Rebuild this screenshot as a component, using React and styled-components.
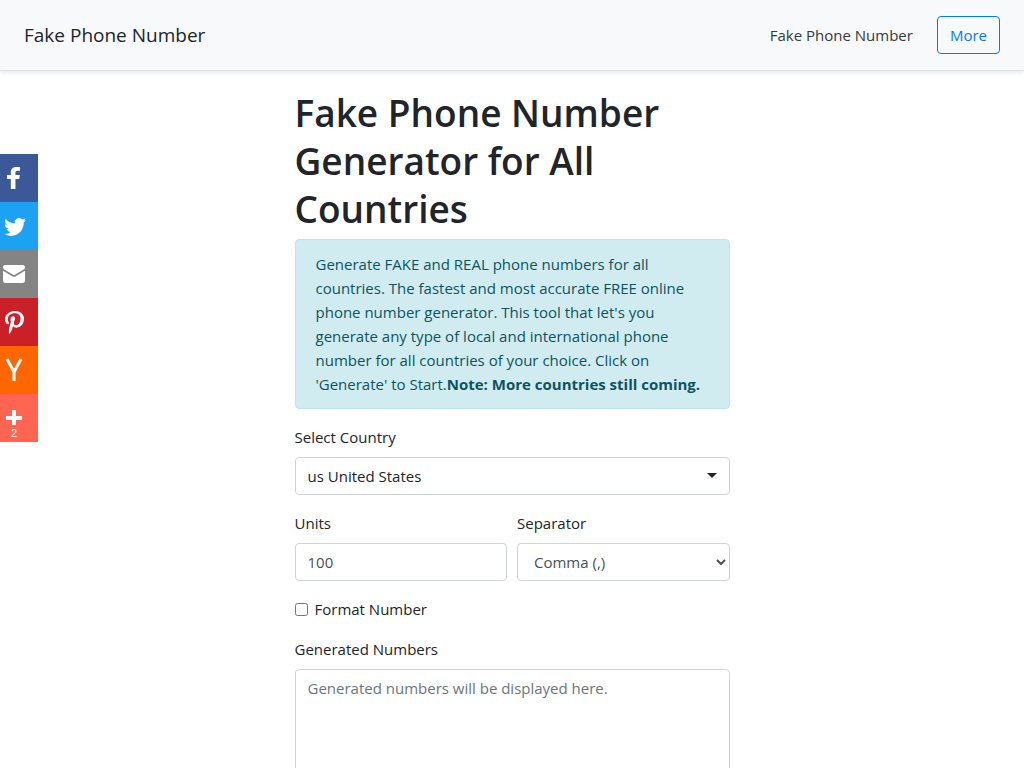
import React from "react";
import styled, { createGlobalStyle } from "styled-components";

const GlobalStyle = createGlobalStyle`
  *, *::before, *::after { box-sizing: border-box; }
  body {
    margin: 0;
    background: #fff;
    color: #212529;
    font-family: "Segoe UI", "Open Sans", "Noto Sans", sans-serif;
    font-size: 15px;
    line-height: 24px;
  }
  input, select, textarea, button { font: inherit; }
`;

const Header = styled.header`
  display: flex;
  align-items: center;
  justify-content: space-between;
  padding: 16px 24px;
  background: #f8f9fa;
  border-bottom: 1px solid #dee2e6;
  box-shadow: 0 2px 4px rgba(0, 0, 0, 0.08);
`;

const Brand = styled.a`
  color: #212529;
  font-size: 19px;
  text-decoration: none;
`;

const Nav = styled.nav`
  display: flex;
  align-items: center;
  gap: 24px;
`;

const NavLink = styled.a`
  color: #343a40;
  text-decoration: none;
`;

const MoreButton = styled.button`
  height: 38px;
  padding: 0 12px;
  color: #007bff;
  background: transparent;
  border: 1px solid #007bff;
  border-radius: 4px;
`;

const ShareBar = styled.aside`
  position: fixed;
  top: 154px;
  left: -10px;
  display: flex;
  flex-direction: column;
`;

const ShareButton = styled.button`
  position: relative;
  width: 48px;
  height: 48px;
  padding: 8px;
  border: 0;
  color: #fff;
  background: ${(p) => p.$color};

  svg { display: block; }
`;

const ShareCount = styled.span`
  position: absolute;
  inset: auto 0 2px;
  font: 11px/14px "Liberation Sans", Arial, sans-serif;
  text-align: center;
`;

const Main = styled.main`
  max-width: 435px;
  margin: 0 auto;
  padding: 18px 0 24px;
`;

const Title = styled.h1`
  margin: 0 0 6px;
  font-size: 37px;
  font-weight: 600;
  line-height: 48px;
`;

const Notice = styled.p`
  margin: 0 0 16px;
  padding: 12px 20px;
  color: #0c5460;
  background: #d1ecf1;
  border: 1px solid #bee5eb;
  border-radius: 4px;
`;

const Form = styled.form`
  display: flex;
  flex-direction: column;
  gap: 16px;
`;

const Row = styled.div`
  display: grid;
  grid-template-columns: 1fr 1fr;
  gap: 10px;
`;

const Field = styled.div`
  display: flex;
  flex-direction: column;
  gap: 8px;
`;

const Label = styled.label`
  color: #212529;
`;

const Control = styled.input`
  width: 100%;
  height: 38px;
  padding: 6px 12px;
  color: #495057;
  background: #fff;
  border: 1px solid #ced4da;
  border-radius: 4px;
`;

const CountrySelect = styled(Control)`
  appearance: none;
  color: #212529;
`;

const SelectWrap = styled.div`
  position: relative;

  &::after {
    content: "";
    position: absolute;
    top: 16px;
    right: 13px;
    border: 5px solid transparent;
    border-top-color: #212529;
    border-bottom: 0;
    pointer-events: none;
  }
`;

const Output = styled(Control)`
  display: block;
  height: auto;
  resize: vertical;

  &::placeholder { color: #6c757d; }
`;

const CheckRow = styled.div`
  display: flex;
  align-items: center;
  gap: 7px;
`;

const Checkbox = styled.input`
  width: 13px;
  height: 13px;
  margin: 0;
`;

const networks = [
  {
    name: "Facebook",
    color: "#3b5998",
    art: <path d="M22 5.16c-.406-.054-1.806-.16-3.43-.16-3.4 0-5.733 1.825-5.733 5.17v2.882H9v3.913h3.837V27h4.604V16.965h3.823l.587-3.913h-4.41v-2.5c0-1.123.347-1.903 2.198-1.903H22V5.16z" />,
  },
  {
    name: "Twitter",
    color: "#1da1f2",
    art: <path d="M27.996 10.116c-.81.36-1.68.602-2.592.71a4.526 4.526 0 0 0 1.984-2.496 9.037 9.037 0 0 1-2.866 1.095 4.513 4.513 0 0 0-7.69 4.116 12.81 12.81 0 0 1-9.3-4.715 4.49 4.49 0 0 0-.612 2.27 4.51 4.51 0 0 0 2.008 3.755 4.495 4.495 0 0 1-2.044-.564v.057a4.515 4.515 0 0 0 3.62 4.425 4.52 4.52 0 0 1-2.04.077 4.517 4.517 0 0 0 4.217 3.134 9.055 9.055 0 0 1-5.604 1.93A9.18 9.18 0 0 1 6 23.85a12.773 12.773 0 0 0 6.918 2.027c8.3 0 12.84-6.876 12.84-12.84 0-.195-.005-.39-.014-.583a9.172 9.172 0 0 0 2.252-2.336" />,
  },
  {
    name: "Email",
    color: "#848484",
    art: (
      <>
        <path d="M27 22.757c0 1.24-.988 2.243-2.19 2.243H7.19C5.98 25 5 23.994 5 22.757V13.67c0-.556.39-.773.855-.496l8.78 5.238c.782.467 1.95.467 2.73 0l8.78-5.238c.472-.28.855-.063.855.495v9.087z" />
        <path d="M27 9.243C27 8.006 26.02 7 24.81 7H7.19C5.988 7 5 8.004 5 9.243v.465c0 .554.385 1.232.857 1.514l9.61 5.733c.267.16.8.16 1.067 0l9.61-5.733c.473-.283.856-.96.856-1.514v-.465z" />
      </>
    ),
  },
  {
    name: "Pinterest",
    color: "#cb2027",
    art: <path d="M7 13.252c0 1.81.772 4.45 2.895 5.045.074.014.178.04.252.04.49 0 .772-1.27.772-1.63 0-.428-1.174-1.34-1.174-3.123 0-3.705 3.028-6.33 6.947-6.33 3.37 0 5.863 1.782 5.863 5.058 0 2.446-1.054 7.035-4.468 7.035-1.232 0-2.286-.83-2.286-2.018 0-1.742 1.307-3.43 1.307-5.225 0-1.092-.67-1.977-1.916-1.977-1.692 0-2.732 1.77-2.732 3.165 0 .774.104 1.63.476 2.336-.683 2.736-2.08 6.814-2.08 9.633 0 .87.135 1.728.224 2.6l.134.137.207-.07c2.494-3.178 2.405-3.8 3.533-7.96.61 1.077 2.182 1.658 3.43 1.658 5.254 0 7.614-4.77 7.614-9.067C26 7.987 21.755 5 17.094 5 12.017 5 7 8.15 7 13.252z" />,
  },
  {
    name: "Hacker News",
    color: "#ff6600",
    art: <path d="M9 5 16 18 23 5M16 17v10" fill="none" stroke="currentColor" strokeWidth="3" />,
  },
  {
    name: "More sharing options",
    color: "#ff6550",
    count: 2,
    art: <path d="M18 14V8h-4v6H8v4h6v5h4v-5h6v-4h-6z" />,
  },
];

export default function App() {
  return (
    <>
      <GlobalStyle />
      <Header>
        <Brand href="#">Fake Phone Number</Brand>
        <Nav>
          <NavLink href="#">Fake Phone Number</NavLink>
          <MoreButton type="button">More</MoreButton>
        </Nav>
      </Header>

      <ShareBar aria-label="Share">
        {networks.map((n) => (
          <ShareButton key={n.name} type="button" aria-label={n.name} $color={n.color}>
            <svg width="32" height="32" viewBox="0 0 32 32" fill="currentColor" aria-hidden="true">
              {n.art}
            </svg>
            {n.count && <ShareCount>{n.count}</ShareCount>}
          </ShareButton>
        ))}
      </ShareBar>

      <Main>
        <Title>Fake Phone Number Generator for All Countries</Title>
        <Notice>
          Generate FAKE and REAL phone numbers for all countries. The fastest and most accurate
          FREE online phone number generator. This tool that let's you generate any type of local
          and international phone number for all countries of your choice. Click on 'Generate' to
          Start.<strong>Note: More countries still coming.</strong>
        </Notice>
        <Form>
          <Field>
            <Label htmlFor="country">Select Country</Label>
            <SelectWrap>
              <CountrySelect as="select" id="country">
                <option>us United States</option>
              </CountrySelect>
            </SelectWrap>
          </Field>
          <Row>
            <Field>
              <Label htmlFor="units">Units</Label>
              <Control id="units" type="text" inputMode="numeric" defaultValue="100" />
            </Field>
            <Field>
              <Label htmlFor="separator">Separator</Label>
              <Control as="select" id="separator">
                <option>Comma (,)</option>
              </Control>
            </Field>
          </Row>
          <CheckRow>
            <Checkbox id="format" type="checkbox" />
            <Label htmlFor="format">Format Number</Label>
          </CheckRow>
          <Field>
            <Label htmlFor="output">Generated Numbers</Label>
            <Output as="textarea" id="output" rows={8} placeholder="Generated numbers will be displayed here." />
          </Field>
        </Form>
      </Main>
    </>
  );
}
